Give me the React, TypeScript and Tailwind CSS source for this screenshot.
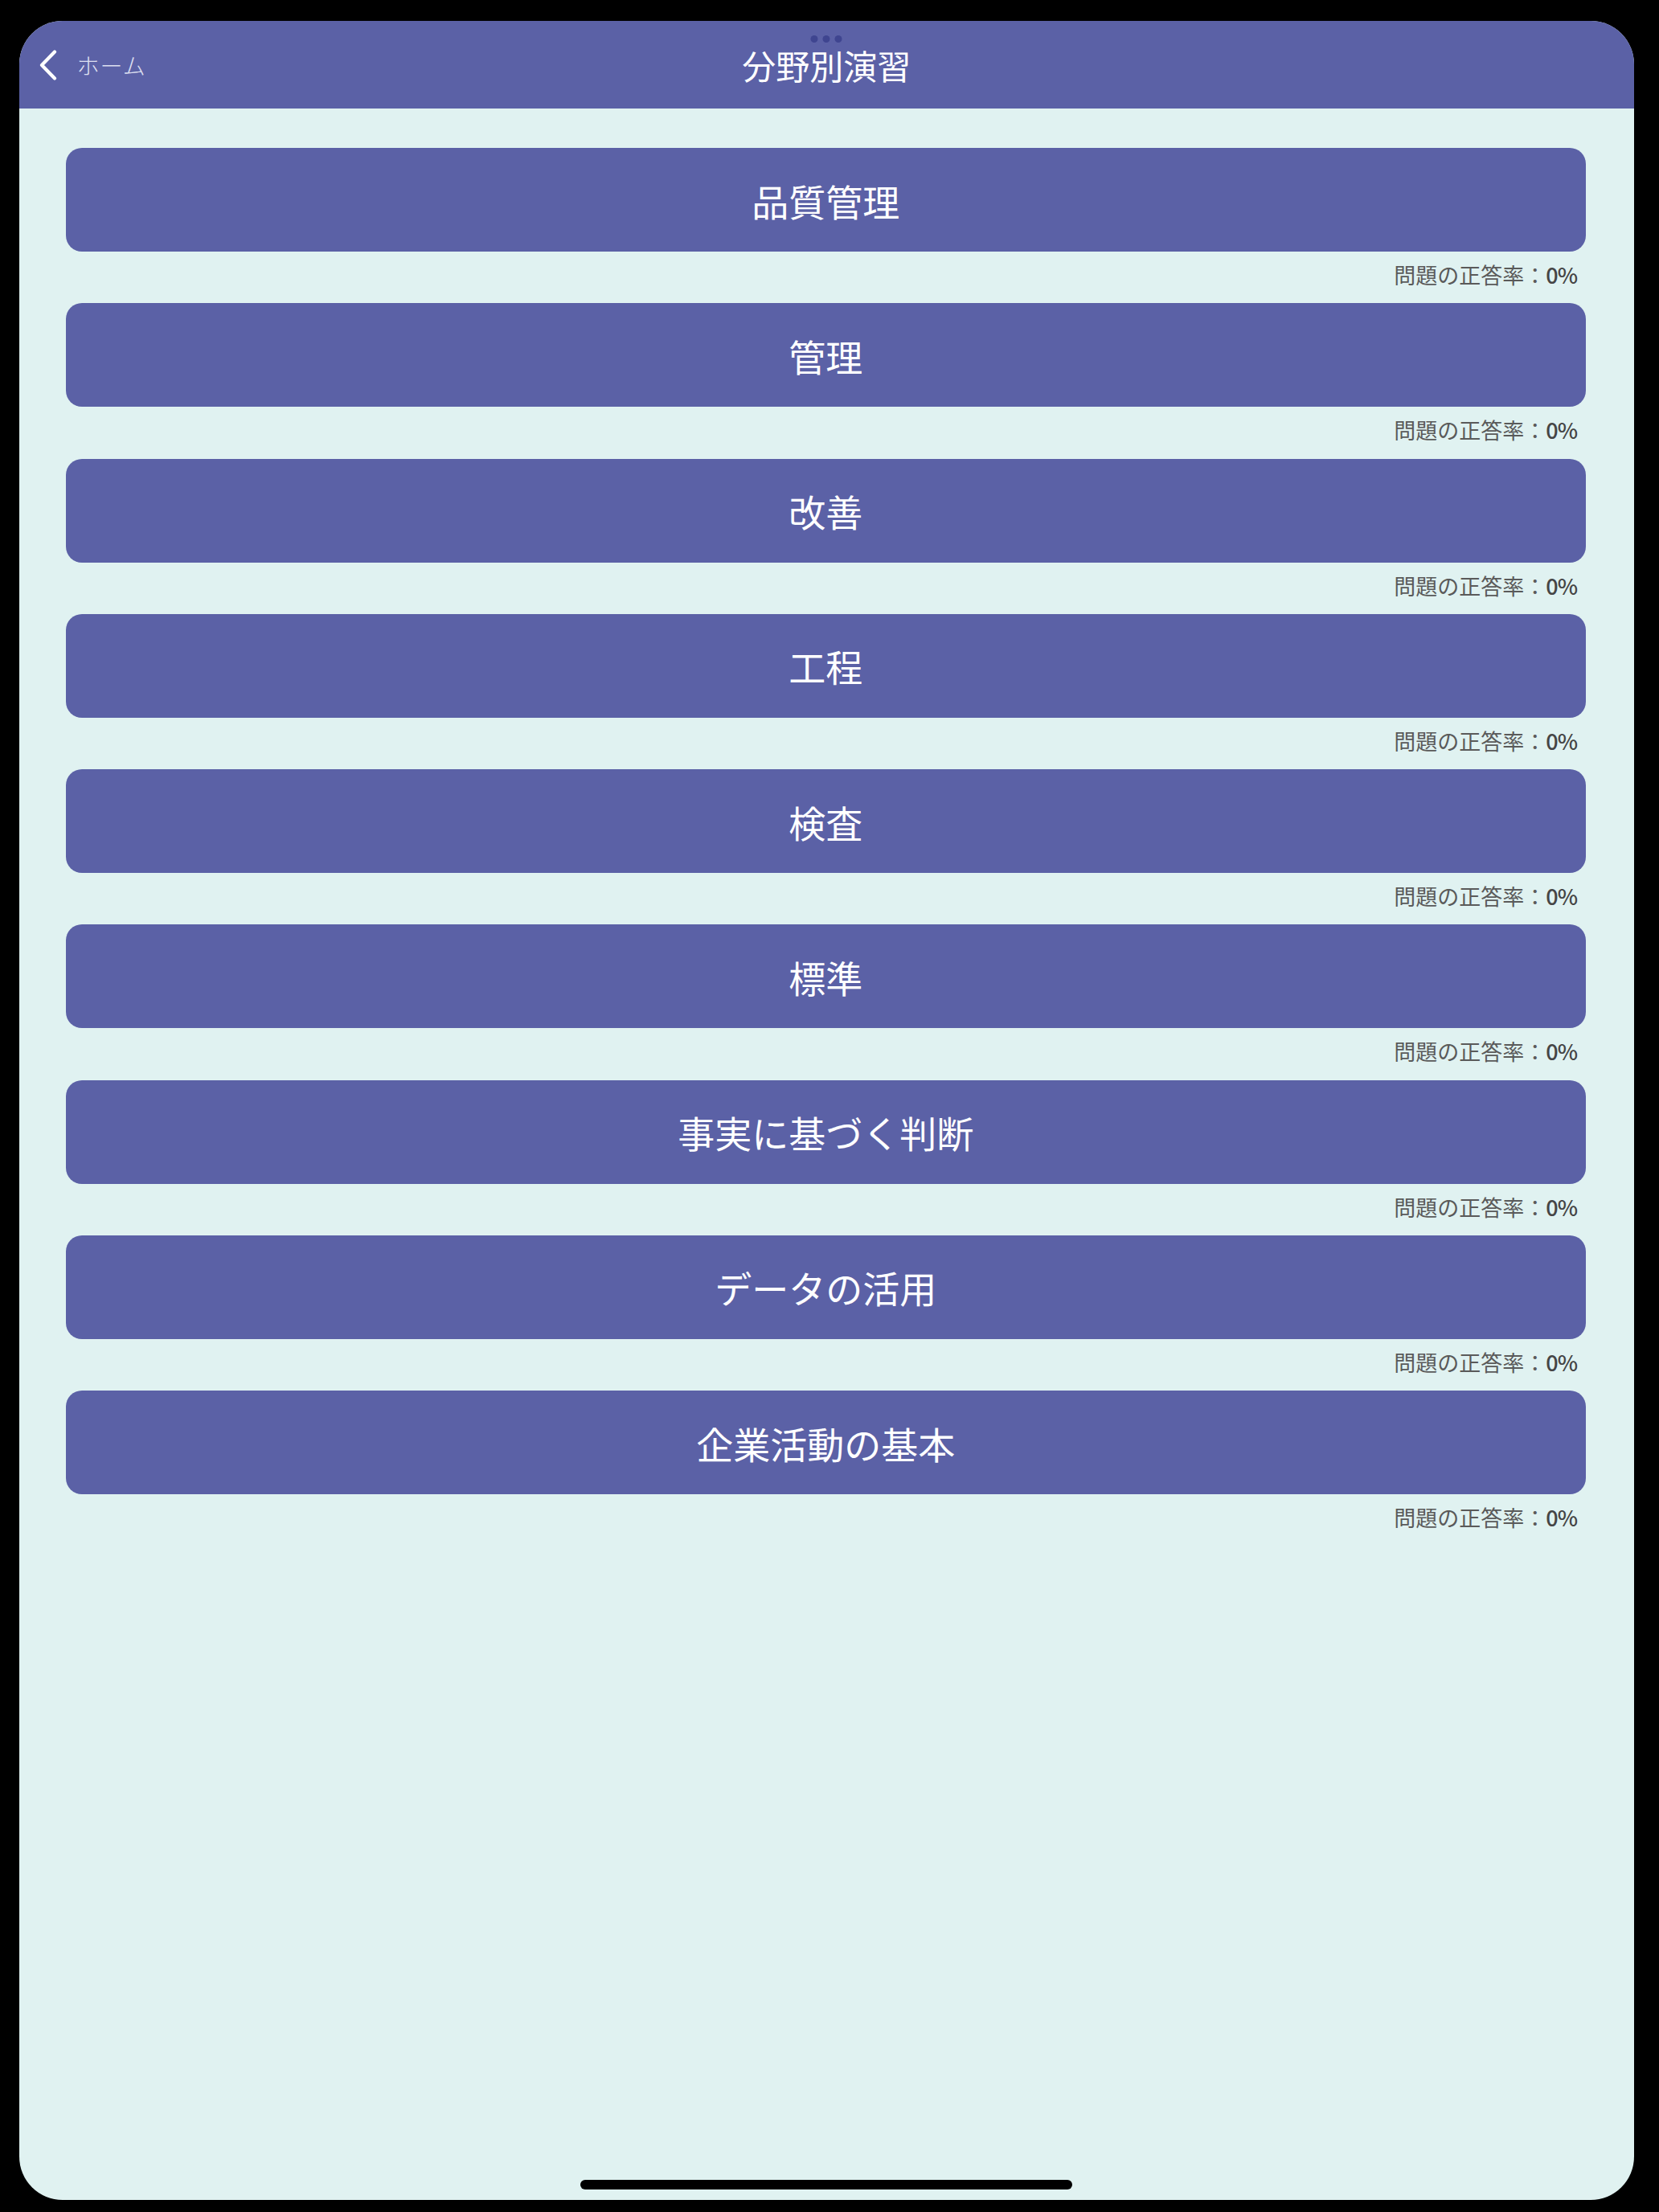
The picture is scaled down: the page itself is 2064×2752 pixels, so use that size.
import React from "react";

const categories = [
  "品質管理",
  "管理",
  "改善",
  "工程",
  "検査",
  "標準",
  "事実に基づく判断",
  "データの活用",
  "企業活動の基本",
];

export default function App() {
  return (
    <div className="w-[2064px] h-[2752px] bg-black pt-[26px] pl-[23.5px] font-['Noto_Sans_CJK_JP','Noto_Sans',sans-serif]">
      <div className="relative w-[2009.5px] h-[2711px] rounded-[54px] overflow-hidden bg-[#e0f2f1] flex flex-col">
        {/* Header */}
        <header className="relative h-[109px] shrink-0 bg-[#5b61a6] grid grid-cols-[1fr_auto_1fr] items-center">
          <div className="flex items-center pl-[24px] gap-[25px]">
            <svg width="23" height="38" viewBox="0 0 23 38" fill="none">
              <path
                d="M20 2.5 L4 19 L20 35.5"
                stroke="white"
                strokeWidth="4.2"
                strokeLinecap="round"
                strokeLinejoin="round"
              />
            </svg>
            <span className="text-[28px] leading-none font-light text-[#dcdff0] tracking-[1px]">
              ホーム
            </span>
          </div>
          <h1 className="text-[42px] leading-none text-white font-normal">分野別演習</h1>
          <div />
          <div className="absolute top-[18px] left-1/2 -translate-x-1/2 flex gap-[6px]">
            <span className="w-[9px] h-[9px] rounded-full bg-[#3f4590]" />
            <span className="w-[9px] h-[9px] rounded-full bg-[#3f4590]" />
            <span className="w-[9px] h-[9px] rounded-full bg-[#3f4590]" />
          </div>
        </header>

        {/* List */}
        <main className="flex flex-col pt-[49px] pl-[58px] pr-[60px]">
          {categories.map((c) => (
            <div key={c} className="flex flex-col">
              <button className="h-[129px] w-full rounded-[20px] bg-[#5b61a6] text-white text-[46px] leading-none font-normal flex items-center justify-center">
                {c}
              </button>
              <div className="h-[64.25px] flex justify-end items-start pt-[13px] pr-[11px]">
                <span className="text-[27px] leading-[32px] text-[#5a5a5a] [text-spacing-trim:space-all] whitespace-nowrap">
                  問題の正答率：<span className="font-medium text-[#454545] tracking-[-1px]">0%</span>
                </span>
              </div>
            </div>
          ))}
        </main>

        {/* Home indicator */}
        <div className="absolute bottom-[13px] left-1/2 -translate-x-1/2 w-[612px] h-[12px] rounded-full bg-black" />
      </div>
    </div>
  );
}
